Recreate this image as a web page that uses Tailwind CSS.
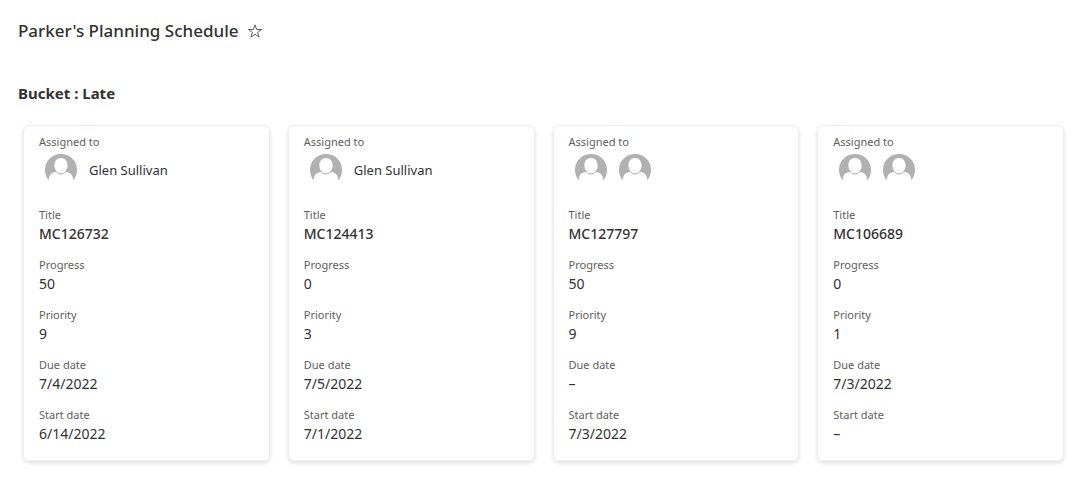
<!DOCTYPE html>
<html lang="en">
<head>
<meta charset="utf-8">
<meta name="viewport" content="width=device-width, initial-scale=1">
<title>Parker's Planning Schedule</title>
<script src="https://cdn.jsdelivr.net/npm/@tailwindcss/browser@4"></script>
</head>
<body class="bg-white font-['Segoe_UI','Noto_Sans',sans-serif] text-[14px] leading-5 text-[#323130]">
<svg class="hidden" aria-hidden="true">
  <symbol id="person" viewBox="0 0 32 32">
    <path fill="#b1b1b1" fill-rule="evenodd" d="M3.800 26.300A16 16 0 1 1 28.200 26.300C28.200 21.500 26 18.500 20.800 18C19.500 19.700 17.900 20.400 16 20.400S12.500 19.700 11.200 18C6 18.500 3.800 21.500 3.800 26.300ZM16 4C12 4 9.400 7.200 9.400 11.400C9.400 15.600 12 19.200 16 19.200S22.600 15.600 22.600 11.400C22.600 7.200 20 4 16 4Z"/>
  </symbol>
</svg>
<header class="flex items-center gap-2 px-[18px] pt-[19px]">
  <h1 class="text-[17px] leading-6 font-medium">Parker's Planning Schedule</h1>
  <button type="button" aria-label="Add to favorites">
    <svg class="size-4" viewBox="0 0 16 16" fill="none" stroke="#605e5c" stroke-width="1"><path d="M8 1.800 9.600 6.500H14.600L10.600 9.400 12.100 14.200 8 11.200 3.900 14.200 5.400 9.400 1.400 6.500H6.400Z"/></svg>
  </button>
</header>
<main class="pt-[38px] pb-8">
  <h2 class="px-[18px] text-[15px] leading-6 font-bold">Bucket : Late</h2>
  <div class="grid grid-cols-4 gap-[18px] pt-5 pr-6 pl-[23px]">
    <article class="rounded-md border border-[#ededed] px-[15px] pt-[7px] pb-4 shadow-[0_2px_4px_rgba(0,0,0,0.13)]">
      <dl>
        <dt class="text-[11px] leading-[18px] text-[#605e5c]">Assigned to</dt>
        <dd class="flex h-[55px] items-start gap-3 px-1.5 pt-[3px]"><svg class="size-8" role="img" aria-label="Glen Sullivan"><use href="#person"/></svg><span class="pt-1.5 text-[13px]">Glen Sullivan</span></dd>
        <dt class="text-[11px] leading-[18px] text-[#605e5c]">Title</dt><dd class="pb-3 font-medium">MC126732</dd>
        <dt class="text-[11px] leading-[18px] text-[#605e5c]">Progress</dt><dd class="pb-3">50</dd>
        <dt class="text-[11px] leading-[18px] text-[#605e5c]">Priority</dt><dd class="pb-3">9</dd>
        <dt class="text-[11px] leading-[18px] text-[#605e5c]">Due date</dt><dd class="pb-3">7/4/2022</dd>
        <dt class="text-[11px] leading-[18px] text-[#605e5c]">Start date</dt><dd>6/14/2022</dd>
      </dl>
    </article>
    <article class="rounded-md border border-[#ededed] px-[15px] pt-[7px] pb-4 shadow-[0_2px_4px_rgba(0,0,0,0.13)]">
      <dl>
        <dt class="text-[11px] leading-[18px] text-[#605e5c]">Assigned to</dt>
        <dd class="flex h-[55px] items-start gap-3 px-1.5 pt-[3px]"><svg class="size-8" role="img" aria-label="Glen Sullivan"><use href="#person"/></svg><span class="pt-1.5 text-[13px]">Glen Sullivan</span></dd>
        <dt class="text-[11px] leading-[18px] text-[#605e5c]">Title</dt><dd class="pb-3 font-medium">MC124413</dd>
        <dt class="text-[11px] leading-[18px] text-[#605e5c]">Progress</dt><dd class="pb-3">0</dd>
        <dt class="text-[11px] leading-[18px] text-[#605e5c]">Priority</dt><dd class="pb-3">3</dd>
        <dt class="text-[11px] leading-[18px] text-[#605e5c]">Due date</dt><dd class="pb-3">7/5/2022</dd>
        <dt class="text-[11px] leading-[18px] text-[#605e5c]">Start date</dt><dd>7/1/2022</dd>
      </dl>
    </article>
    <article class="rounded-md border border-[#ededed] px-[15px] pt-[7px] pb-4 shadow-[0_2px_4px_rgba(0,0,0,0.13)]">
      <dl>
        <dt class="text-[11px] leading-[18px] text-[#605e5c]">Assigned to</dt>
        <dd class="flex h-[55px] items-start gap-3 px-1.5 pt-[3px]"><svg class="size-8" role="img" aria-label="Assignee"><use href="#person"/></svg><svg class="size-8" role="img" aria-label="Assignee"><use href="#person"/></svg></dd>
        <dt class="text-[11px] leading-[18px] text-[#605e5c]">Title</dt><dd class="pb-3 font-medium">MC127797</dd>
        <dt class="text-[11px] leading-[18px] text-[#605e5c]">Progress</dt><dd class="pb-3">50</dd>
        <dt class="text-[11px] leading-[18px] text-[#605e5c]">Priority</dt><dd class="pb-3">9</dd>
        <dt class="text-[11px] leading-[18px] text-[#605e5c]">Due date</dt><dd class="pb-3">–</dd>
        <dt class="text-[11px] leading-[18px] text-[#605e5c]">Start date</dt><dd>7/3/2022</dd>
      </dl>
    </article>
    <article class="rounded-md border border-[#ededed] px-[15px] pt-[7px] pb-4 shadow-[0_2px_4px_rgba(0,0,0,0.13)]">
      <dl>
        <dt class="text-[11px] leading-[18px] text-[#605e5c]">Assigned to</dt>
        <dd class="flex h-[55px] items-start gap-3 px-1.5 pt-[3px]"><svg class="size-8" role="img" aria-label="Assignee"><use href="#person"/></svg><svg class="size-8" role="img" aria-label="Assignee"><use href="#person"/></svg></dd>
        <dt class="text-[11px] leading-[18px] text-[#605e5c]">Title</dt><dd class="pb-3 font-medium">MC106689</dd>
        <dt class="text-[11px] leading-[18px] text-[#605e5c]">Progress</dt><dd class="pb-3">0</dd>
        <dt class="text-[11px] leading-[18px] text-[#605e5c]">Priority</dt><dd class="pb-3">1</dd>
        <dt class="text-[11px] leading-[18px] text-[#605e5c]">Due date</dt><dd class="pb-3">7/3/2022</dd>
        <dt class="text-[11px] leading-[18px] text-[#605e5c]">Start date</dt><dd>–</dd>
      </dl>
    </article>
  </div>
</main>
</body>
</html>
